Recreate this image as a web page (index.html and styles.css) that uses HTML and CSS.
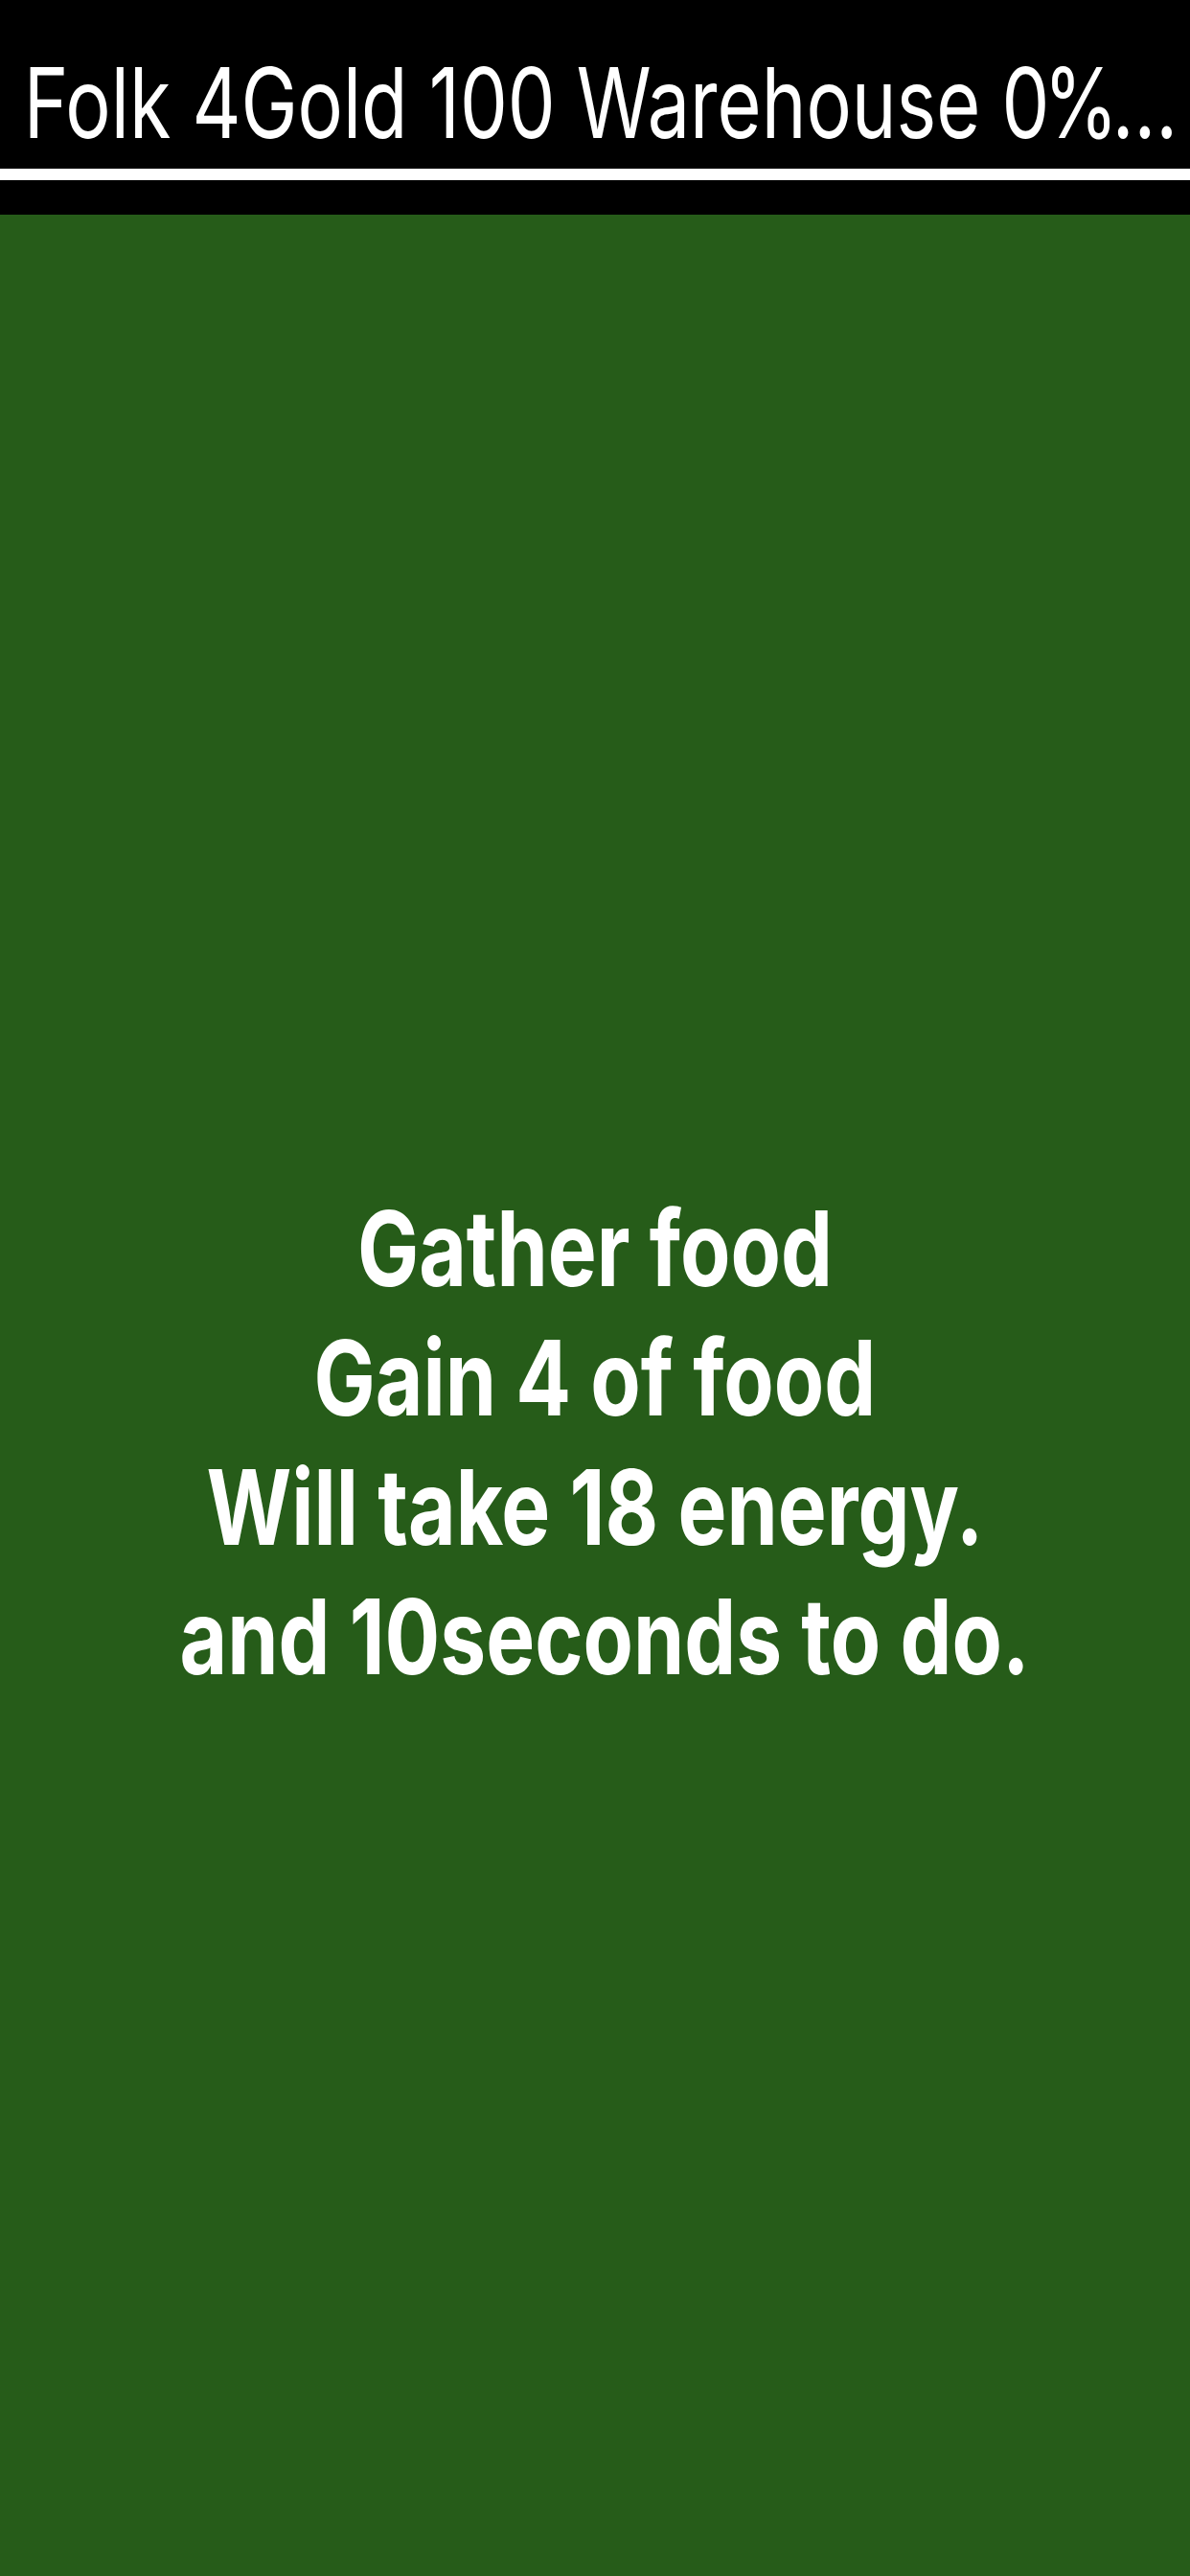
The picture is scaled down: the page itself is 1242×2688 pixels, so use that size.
FILE: index.html
```html
<!DOCTYPE html>
<html lang="en">
<head>
<meta charset="utf-8">
<title>Gather food</title>
<link rel="stylesheet" href="styles.css">
</head>
<body>
<div class="app">
  <header class="topbar">
    <div class="status">Folk 4Gold 100 Warehouse <span class="tail">0%…</span></div>
    <div class="rule"></div>
  </header>
  <main class="field">
    <div class="task">
      <div class="line">Gather food</div>
      <div class="line">Gain 4 of food</div>
      <div class="line">Will take 18 energy.</div>
      <div class="line">&nbsp;and 10seconds to do.</div>
    </div>
  </main>
</div>
</body>
</html>
```

FILE: styles.css
```css
html, body {
  margin: 0;
  padding: 0;
  background: #000;
}
.app {
  width: 1242px;
  height: 2688px;
  display: flex;
  flex-direction: column;
  font-family: Inter, "Liberation Sans", sans-serif;
  color: #fff;
  overflow: hidden;
}
.topbar {
  background: #000;
  flex: none;
  padding: 45px 0 36px;
}
.status {
  box-sizing: border-box;
  width: 1600px;
  padding-left: 32px;
  font-size: 102px;
  font-weight: 400;
  line-height: 124px;
  white-space: nowrap;
  overflow: hidden;
  transform: scaleX(0.775);
  transform-origin: 0 50%;
}
.tail {
  letter-spacing: -8px;
}
.rule {
  height: 12px;
  margin-top: 7px;
  background: #fff;
}
.field {
  flex: 1;
  background: #265c19;
  display: flex;
  flex-direction: column;
  align-items: center;
  padding-top: 1011px;
}
.task {
  font-size: 109px;
  font-weight: 700;
  line-height: 135px;
  text-align: center;
  transform: scaleX(0.785);
  transform-origin: 50% 50%;
}
.line {
  white-space: nowrap;
}
```
